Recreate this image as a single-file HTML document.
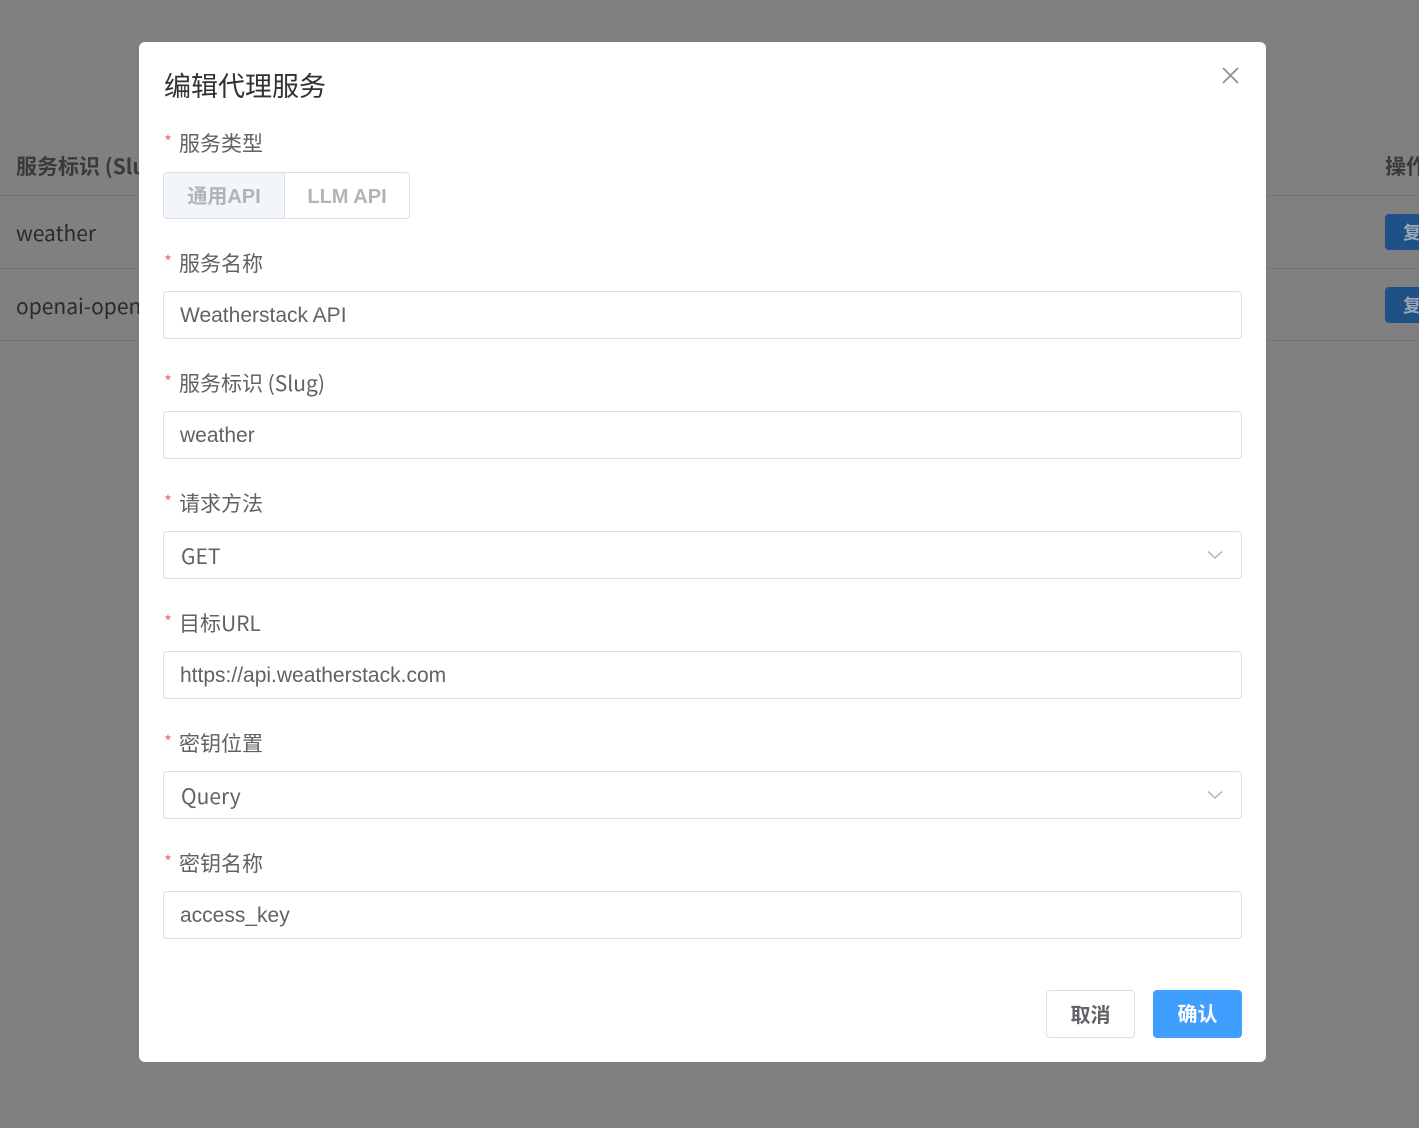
<!DOCTYPE html>
<html><head><meta charset="utf-8"><style>
*{box-sizing:border-box;margin:0;padding:0}
body{width:1419px;height:1128px;background:#808080;position:relative;overflow:hidden;font-family:"Liberation Sans","Noto Sans CJK SC",sans-serif}
.bg{position:absolute;font-family:"Noto Sans CJK SC",sans-serif;color:#2a2a2a;font-size:21px;white-space:nowrap}
.line{position:absolute;left:0;width:1419px;height:1px;background:#737373}
.bbtn{position:absolute;left:1385px;width:40px;height:36px;background:#1f5086;border-radius:4px;color:#9aa8b8;font-family:"Noto Sans CJK SC",sans-serif;font-size:18px;font-weight:bold;padding:5px 0 0 18px}
.modal{position:absolute;left:139px;top:42px;width:1127px;height:1020px;background:#fff;border-radius:6px}
.title{position:absolute;left:25px;top:23px;font-family:"Noto Sans CJK SC",sans-serif;font-size:27px;color:#303133;white-space:nowrap}
.lab{position:absolute;left:25px;font-family:"Noto Sans CJK SC",sans-serif;font-size:21px;color:#606266;line-height:30px;white-space:nowrap}
.lab b{color:#f56c6c;font-weight:normal;font-size:17px;margin-right:7px;position:relative;top:-3px}
.inp{position:absolute;left:24px;width:1079px;height:48px;border:1px solid #dcdfe6;border-radius:4px;font-size:21px;color:#606266;padding:0 16px;line-height:48px}
.inp.cj{font-family:"Noto Sans CJK SC",sans-serif;padding-left:17px;line-height:48px}
.arrow{position:absolute;right:18px;top:18px}
.seg{position:absolute;left:24px;top:130px;height:47px;border:1px solid #dcdfe6;border-radius:4px;display:flex;overflow:hidden;font-size:20px;color:#b0b3b8;font-weight:bold}
.seg div{line-height:48px;text-align:center}
.btn{position:absolute;top:948px;height:48px;border-radius:4px;font-family:"Noto Sans CJK SC",sans-serif;font-size:20px;font-weight:bold;text-align:center;line-height:46px}
</style></head><body>
<div class="bg" style="left:16px;top:151px;font-weight:bold;color:#3a3a3a">服务标识 (Slug)</div>
<div class="bg" style="left:1385px;top:151px;font-weight:bold;color:#3a3a3a">操作</div>
<div class="line" style="top:195px"></div>
<div class="bg" style="left:16px;top:218px">weather</div>
<div class="bbtn" style="top:214px">复</div>
<div class="line" style="top:268px"></div>
<div class="bg" style="left:16px;top:291px">openai-openai</div>
<div class="bbtn" style="top:287px">复</div>
<div class="line" style="top:340px"></div>

<div class="modal">
<div class="title">编辑代理服务</div>
<svg style="position:absolute;left:1083px;top:25px" width="17" height="17" viewBox="0 0 17 17"><path d="M1 1L16 16M16 1L1 16" stroke="#8a8d93" stroke-width="1.6"/></svg>

<div class="lab" style="top:86px"><b>*</b>服务类型</div>
<div class="seg"><div style="width:121px;background:#f2f5fa;border-right:1px solid #dcdfe6">通用API</div><div style="width:124px">LLM API</div></div>

<div class="lab" style="top:206px"><b>*</b>服务名称</div>
<div class="inp" style="top:249px">Weatherstack API</div>

<div class="lab" style="top:326px"><b>*</b>服务标识 (Slug)</div>
<div class="inp" style="top:369px">weather</div>

<div class="lab" style="top:446px"><b>*</b>请求方法</div>
<div class="inp cj" style="top:489px">GET<svg class="arrow" width="16" height="10" viewBox="0 0 16 10"><path d="M1 1.5L8 8L15 1.5" stroke="#a8abb2" stroke-width="1.3" fill="none"/></svg></div>

<div class="lab" style="top:566px"><b>*</b>目标URL</div>
<div class="inp" style="top:609px">https://api.weatherstack.com</div>

<div class="lab" style="top:686px"><b>*</b>密钥位置</div>
<div class="inp cj" style="top:729px">Query<svg class="arrow" width="16" height="10" viewBox="0 0 16 10"><path d="M1 1.5L8 8L15 1.5" stroke="#a8abb2" stroke-width="1.3" fill="none"/></svg></div>

<div class="lab" style="top:806px"><b>*</b>密钥名称</div>
<div class="inp" style="top:849px">access_key</div>

<div class="btn" style="left:907px;width:89px;border:1px solid #dcdfe6;color:#606266">取消</div>
<div class="btn" style="left:1014px;width:89px;background:#409eff;color:#fff">确认</div>
</div>
</body></html>
